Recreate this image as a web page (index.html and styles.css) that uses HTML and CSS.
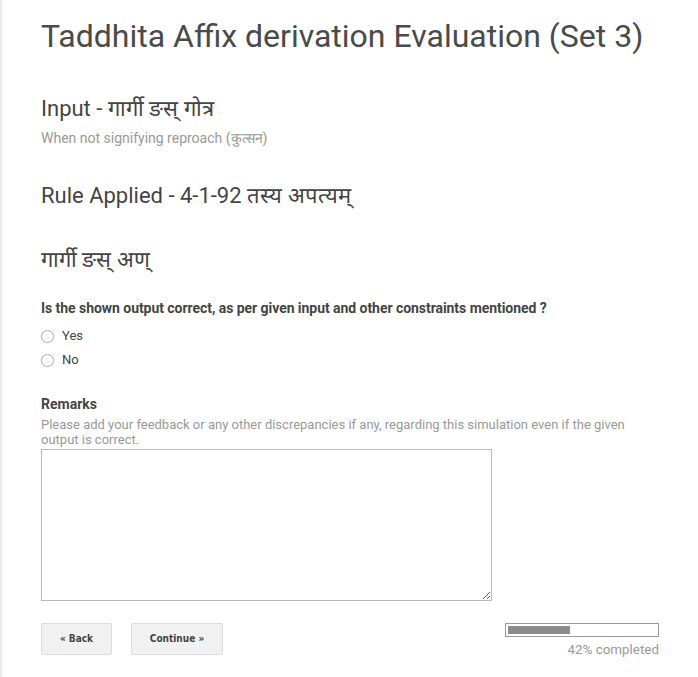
FILE: index.html
```html
<!DOCTYPE html>
<html>
<head>
<meta charset="utf-8">
<link rel="stylesheet" href="styles.css">
</head>
<body>
<div class="page">
  <div class="strip"></div>
  <main class="form">
    <h1 class="title">Taddhita Affix derivation Evaluation (Set 3)</h1>
    <section class="block first">
      <h2 class="head">Input - गार्गी ङस् गोत्र</h2>
      <p class="desc">When not signifying reproach (कुत्सन)</p>
    </section>
    <section class="block rule">
      <h2 class="head">Rule Applied - 4-1-92 तस्य अपत्यम्</h2>
    </section>
    <section class="block out">
      <h2 class="head">गार्गी ङस् अण्</h2>
    </section>
    <section class="question">
      <div class="qtitle">Is the shown output correct, as per given input and other constraints mentioned ?</div>
      <label class="opt"><span class="radio"></span>Yes</label>
      <label class="opt"><span class="radio"></span>No</label>
    </section>
    <section class="remarks">
      <div class="rtitle">Remarks</div>
      <div class="rhelp">Please add your feedback or any other discrepancies if any, regarding this simulation even if the given output is correct.</div>
      <textarea class="area"></textarea>
    </section>
    <footer class="nav">
      <button class="btn back">« Back</button>
      <button class="btn cont">Continue »</button>
      <div class="progress">
        <div class="bar"><div class="fill" style="width:42%"></div></div>
        <div class="ptext">42% completed</div>
      </div>
    </footer>
  </main>
</div>
</body>
</html>
```
FILE: styles.css
```css
html, body {
  margin: 0;
  padding: 0;
  background: #fff;
}
body {
  font-family: Roboto, "Liberation Sans", sans-serif;
  color: #444;
}
.page {
  display: flex;
  min-height: 677px;
}
.strip {
  width: 2px;
  background: #ebebeb;
  flex: none;
}
.form {
  flex: 1;
  padding: 0 39px 0 39px;
}
.title {
  margin: 0;
  padding-top: 16px;
  font-size: 32px;
  font-weight: 400;
  line-height: 40px;
  color: #4a4a4a;
}
.block {
  margin: 0;
}
.head {
  margin: 0;
  font-size: 22px;
  font-weight: 400;
  line-height: 30px;
  color: #444;
}
.first {
  padding-top: 38px;
}
.desc {
  margin: 5px 0 0;
  font-size: 14px;
  line-height: 19px;
  color: #999;
}
.rule {
  padding-top: 33px;
}
.out {
  padding-top: 34px;
}
.question {
  padding-top: 24px;
}
.qtitle {
  font-size: 14px;
  font-weight: 700;
  line-height: 18px;
  color: #444;
  letter-spacing: -0.05px;
}
.opt {
  display: flex;
  align-items: center;
  gap: 8px;
  font-size: 13px;
  line-height: 24px;
  color: #444;
}
.question .qtitle + .opt {
  margin-top: 7px;
}
.radio {
  width: 11px;
  height: 11px;
  border: 1px solid #aaa;
  border-radius: 50%;
  background: #fff;
  display: inline-block;
}
.remarks {
  padding-top: 23px;
}
.rtitle {
  font-size: 14px;
  font-weight: 700;
  line-height: 18px;
  color: #444;
}
.rhelp {
  font-size: 13px;
  line-height: 15px;
  color: #999;
  max-width: 600px;
  margin-top: 4px;
}
.area {
  display: block;
  box-sizing: border-box;
  width: 451px;
  height: 152px;
  margin-top: 2px;
  border: 1px solid #bbb;
  border-radius: 0;
  padding: 2px;
}
.nav {
  display: flex;
  align-items: flex-start;
  margin-top: 22px;
}
.btn {
  font-family: "DejaVu Sans Condensed", "DejaVu Sans", sans-serif;
  font-stretch: condensed;
  font-size: 10px;
  font-weight: 700;
  color: #444;
  background: #f1f1f1;
  border: 1px solid #dcdcdc;
  border-radius: 2px;
  height: 32px;
  padding: 0 0 2px;
}
.back {
  width: 71px;
}
.cont {
  width: 92px;
  margin-left: 19px;
}
.progress {
  margin-left: auto;
  width: 154px;
  display: flex;
  flex-direction: column;
  align-items: flex-end;
}
.bar {
  box-sizing: border-box;
  width: 154px;
  height: 14px;
  border: 1px solid #999;
  padding: 2px;
  background: #fff;
}
.fill {
  height: 100%;
  background: #8c8c8c;
}
.ptext {
  font-size: 13.4px;
  color: #999;
  margin-top: 5px;
  line-height: 16px;
}
```
